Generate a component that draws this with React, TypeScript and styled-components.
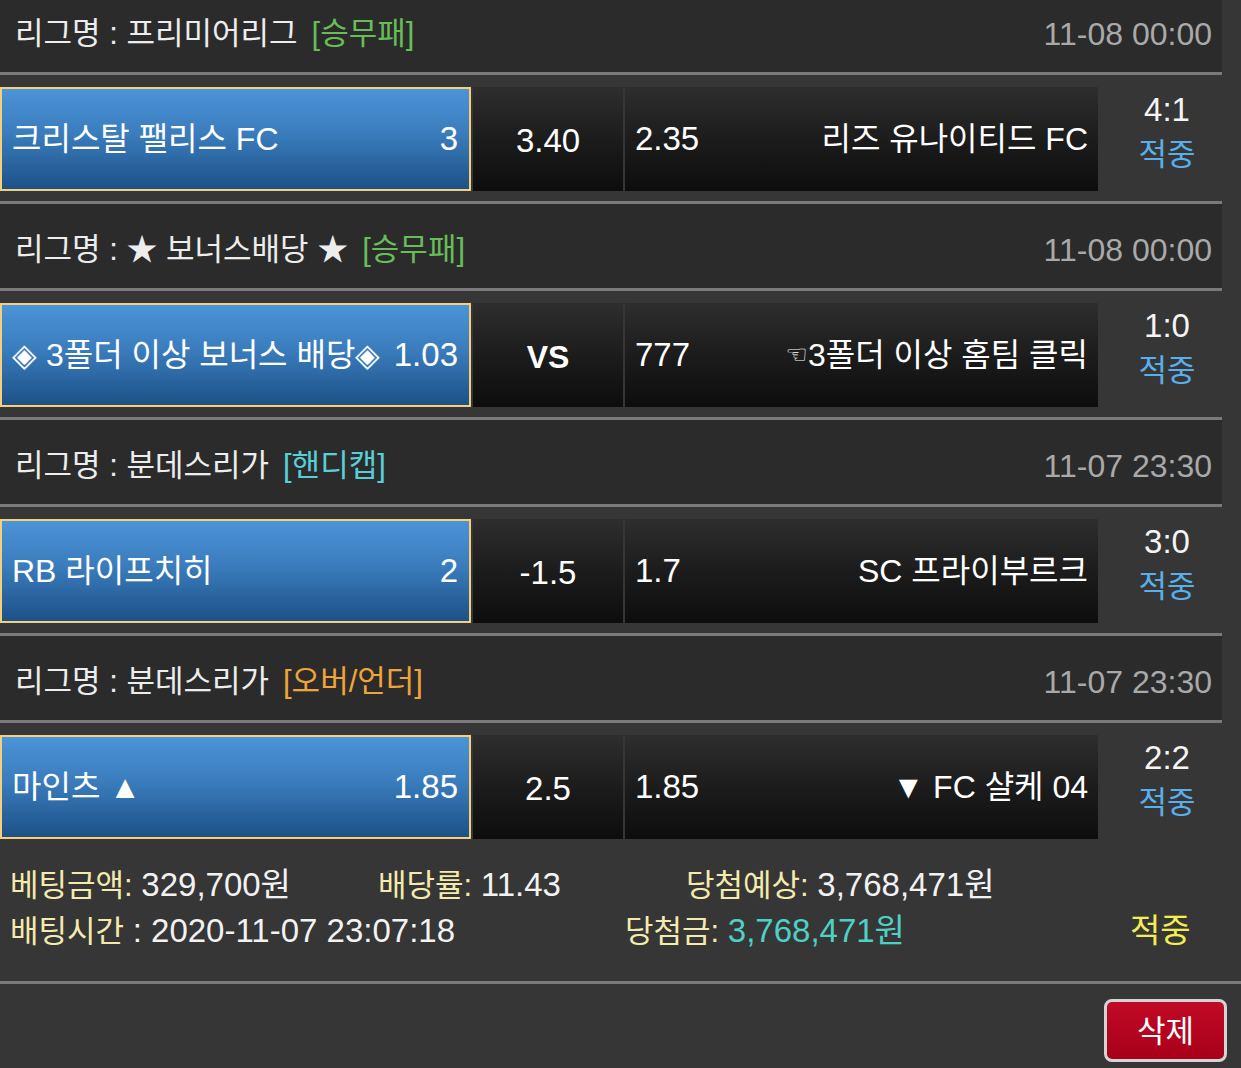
import React from 'react';
import styled, { createGlobalStyle } from 'styled-components';

const Global = createGlobalStyle`
  html, body { margin: 0; padding: 0; background: #363636; overflow: hidden; }
  body {
    font-family: 'Liberation Sans', 'Noto Sans CJK KR', sans-serif;
    color: #f2f2f2;
  }
  #root { width: 1241px; }
`;

const Page = styled.div`
  width: 1241px;
  margin-top: -15px;
`;

const LeagueHeader = styled.div`
  box-sizing: border-box;
  width: 1222px;
  height: 90px;
  border-top: 3px solid #7a7a7a;
  border-bottom: 3px solid #7a7a7a;
  background: #2b2b2b;
  display: flex;
  align-items: center;
  justify-content: space-between;
  padding: 8px 10px 0 15px;
  font-size: 31px;
  line-height: 40px;
`;

const LeagueName = styled.span`
  color: #ededed;
  white-space: nowrap;
`;

const Tag = styled.span<{ $color: string }>`
  color: ${(p) => p.$color};
  margin-left: 14px;
`;

const Time = styled.span`
  color: #a9a9a9;
  font-size: 32px;
`;

const MatchRow = styled.div`
  box-sizing: border-box;
  height: 126px;
  width: 1222px;
  padding: 12px 0 10px 0;
  display: grid;
  grid-template-columns: 471px 150px 473px 124px;
  column-gap: 2px;
`;

const HomeCell = styled.div`
  box-sizing: border-box;
  border: 2px solid #f5d07c;
  background: linear-gradient(to bottom, #4b94d8 0%, #3a7cbc 45%, #1d5188 100%);
  display: flex;
  align-items: center;
  justify-content: space-between;
  padding: 0 11px 0 10px;
  font-size: 32px;
  line-height: 40px;
  color: #ffffff;
  white-space: nowrap;
`;

const Odds = styled.span`
  font-size: 33px;
`;

const DarkCell = styled.div`
  background: linear-gradient(to bottom, #2e2e2e 0%, #1c1c1c 50%, #0d0d0d 100%);
  display: flex;
  align-items: center;
  color: #ffffff;
  font-size: 32px;
  line-height: 40px;
  white-space: nowrap;
`;

const DrawCell = styled(DarkCell)<{ $bold?: boolean }>`
  justify-content: center;
  padding-top: 4px;
  font-weight: ${(p) => (p.$bold ? 700 : 400)};
  font-size: ${(p) => (p.$bold ? '32px' : '33px')};
`;

const AwayCell = styled(DarkCell)`
  justify-content: space-between;
  padding: 0 10px 0 10px;
`;

const Pointer = styled.span`
  font-family: 'DejaVu Sans', sans-serif;
  font-size: 25px;
  vertical-align: 3px;
`;

const ScoreCell = styled.div`
  display: flex;
  flex-direction: column;
  align-items: center;
  padding-left: 10px;
  line-height: 45px;
  font-size: 31px;
`;

const Score = styled.span`
  color: #f4f4f4;
  font-size: 33px;
`;

const Result = styled.span`
  color: #5aaeea;
  font-size: 31px;
`;

const Footer = styled.div`
  box-sizing: border-box;
  width: 1241px;
  padding: 13px 0 27px 0;
  border-bottom: 3px solid #7a7a7a;
  font-size: 31px;
  line-height: 45px;
`;

const FooterLine = styled.div<{ $cols: string }>`
  display: grid;
  grid-template-columns: ${(p) => p.$cols};
  padding-left: 10px;
  white-space: nowrap;
`;

const Label = styled.span`
  color: #f3ebad;
`;

const Value = styled.span<{ $color?: string }>`
  color: ${(p) => p.$color || '#f2f2f2'};
  font-size: 33px;
`;

const Actions = styled.div`
  display: flex;
  justify-content: flex-end;
  padding: 15px 14px 0 0;
`;

const DeleteButton = styled.button`
  box-sizing: border-box;
  width: 123px;
  height: 63px;
  border: 3px solid #d4d4d4;
  border-radius: 8px;
  background: linear-gradient(to bottom, #c10a26 0%, #a8001a 100%);
  color: #ffffff;
  font-family: 'Liberation Sans', 'Noto Sans CJK KR', sans-serif;
  font-size: 31px;
  padding: 0 0 4px 0;
  cursor: pointer;
`;

type Match = {
  league: string;
  tag: string;
  tagColor: string;
  time: string;
  home: React.ReactNode;
  homeOdds: string;
  draw: string;
  drawBold?: boolean;
  awayOdds: string;
  away: React.ReactNode;
  score: string;
};

const GREEN = '#67bd57';
const CYAN = '#58cfd8';
const ORANGE = '#f0a43a';

const matches: Match[] = [
  {
    league: '리그명 : 프리미어리그',
    tag: '[승무패]',
    tagColor: GREEN,
    time: '11-08 00:00',
    home: '크리스탈 팰리스 FC',
    homeOdds: '3',
    draw: '3.40',
    awayOdds: '2.35',
    away: '리즈 유나이티드 FC',
    score: '4:1',
  },
  {
    league: '리그명 : ★ 보너스배당 ★',
    tag: '[승무패]',
    tagColor: GREEN,
    time: '11-08 00:00',
    home: '◈ 3폴더 이상 보너스 배당◈',
    homeOdds: '1.03',
    draw: 'VS',
    drawBold: true,
    awayOdds: '777',
    away: (
      <>
        <Pointer>☜</Pointer>3폴더 이상 홈팀 클릭
      </>
    ),
    score: '1:0',
  },
  {
    league: '리그명 : 분데스리가',
    tag: '[핸디캡]',
    tagColor: CYAN,
    time: '11-07 23:30',
    home: 'RB 라이프치히',
    homeOdds: '2',
    draw: '-1.5',
    awayOdds: '1.7',
    away: 'SC 프라이부르크',
    score: '3:0',
  },
  {
    league: '리그명 : 분데스리가',
    tag: '[오버/언더]',
    tagColor: ORANGE,
    time: '11-07 23:30',
    home: '마인츠 ▲',
    homeOdds: '1.85',
    draw: '2.5',
    awayOdds: '1.85',
    away: '▼ FC 샬케 04',
    score: '2:2',
  },
];

export default function App() {
  return (
    <>
      <Global />
      <Page>
        {matches.map((m, i) => (
          <React.Fragment key={i}>
            <LeagueHeader>
              <LeagueName>
                {m.league}
                <Tag $color={m.tagColor}>{m.tag}</Tag>
              </LeagueName>
              <Time>{m.time}</Time>
            </LeagueHeader>
            <MatchRow>
              <HomeCell>
                <span>{m.home}</span>
                <Odds>{m.homeOdds}</Odds>
              </HomeCell>
              <DrawCell $bold={m.drawBold}>{m.draw}</DrawCell>
              <AwayCell>
                <Odds>{m.awayOdds}</Odds>
                <span>{m.away}</span>
              </AwayCell>
              <ScoreCell>
                <Score>{m.score}</Score>
                <Result>적중</Result>
              </ScoreCell>
            </MatchRow>
          </React.Fragment>
        ))}
        <Footer>
          <FooterLine $cols="368px 308px 1fr">
            <span>
              <Label>베팅금액:</Label> <Value>329,700원</Value>
            </span>
            <span>
              <Label>배당률:</Label> <Value>11.43</Value>
            </span>
            <span>
              <Label>당첨예상:</Label> <Value>3,768,471원</Value>
            </span>
          </FooterLine>
          <FooterLine $cols="615px 505px 1fr">
            <span>
              <Label>배팅시간</Label> <Value>: 2020-11-07 23:07:18</Value>
            </span>
            <span>
              <Label>당첨금:</Label> <Value $color="#4fd0c6">3,768,471원</Value>
            </span>
            <span>
              <Value $color="#f3ec55">적중</Value>
            </span>
          </FooterLine>
        </Footer>
        <Actions>
          <DeleteButton>삭제</DeleteButton>
        </Actions>
      </Page>
    </>
  );
}
